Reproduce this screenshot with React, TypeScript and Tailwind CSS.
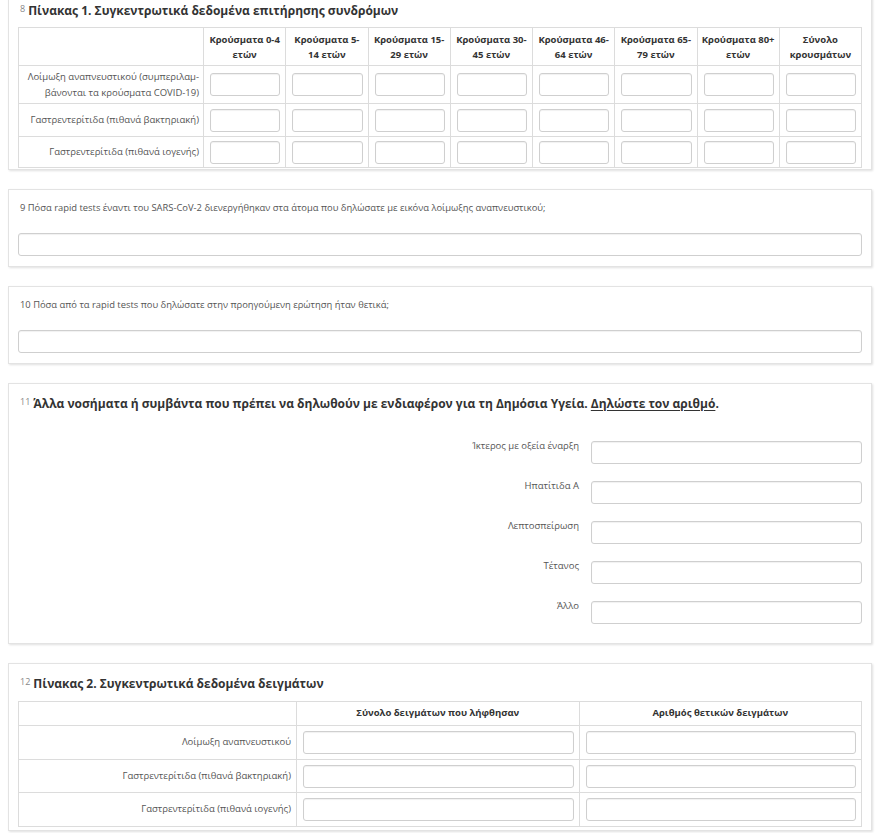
import React from "react";

const font = { fontFamily: '"Open Sans", "Noto Sans", Arial, sans-serif' };

function Card({ children, className = "" }: { children: React.ReactNode; className?: string }) {
  return (
    <div
      className={
        "bg-white border border-[#e3e3e3] shadow-[1px_1px_2px_rgba(0,0,0,0.12)] px-[9px] " + className
      }
    >
      {children}
    </div>
  );
}

function Input({ className = "" }: { className?: string }) {
  return (
    <div
      className={
        "h-[23px] w-full bg-white border border-[#cfcfcf] rounded-[3px] shadow-[inset_0_1px_1px_rgba(0,0,0,0.06)] " +
        className
      }
    />
  );
}

const t1Headers = [
  ["Κρούσματα 0-4", "ετών"],
  ["Κρούσματα 5-", "14 ετών"],
  ["Κρούσματα 15-", "29 ετών"],
  ["Κρούσματα 30-", "45 ετών"],
  ["Κρούσματα 46-", "64 ετών"],
  ["Κρούσματα 65-", "79 ετών"],
  ["Κρούσματα 80+", "ετών"],
  ["Σύνολο", "κρουσμάτων"],
];

const t1Rows: { label: string[]; h: string }[] = [
  { label: ["Λοίμωξη αναπνευστικού (συμπεριλαμ-", "βάνονται τα κρούσματα COVID-19)"], h: "h-[38px]" },
  { label: ["Γαστρεντερίτιδα (πιθανά βακτηριακή)"], h: "h-[33px]" },
  { label: ["Γαστρεντερίτιδα (πιθανά ιογενής)"], h: "h-[31px]" },
];

const t2Rows: { label: string; h: string }[] = [
  { label: "Λοίμωξη αναπνευστικού", h: "h-[34px]" },
  { label: "Γαστρεντερίτιδα (πιθανά βακτηριακή)", h: "h-[33px]" },
  { label: "Γαστρεντερίτιδα (πιθανά ιογενής)", h: "h-[34px]" },
];

const q11Rows = ["Ίκτερος με οξεία έναρξη", "Ηπατίτιδα Α", "Λεπτοσπείρωση", "Τέτανος", "Άλλο"];

function Title({ num, children }: { num: string; children: React.ReactNode }) {
  return (
    <div className="flex items-start h-[18px] pl-[2px]">
      <span className="text-[9px] text-[#888] leading-none mt-[2px] mr-[3px]">{num}</span>
      <span className="text-[12px] font-bold leading-[18px] text-[#333] whitespace-nowrap">{children}</span>
    </div>
  );
}

export default function App() {
  return (
    <div style={font} className="bg-white w-[882px] h-[833px] overflow-hidden text-[#333]">
      <div className="pl-[8px] w-[872px] flex flex-col gap-[19px]">
        {/* Card 1 */}
        <Card className="mt-[-11px] pt-[12px] pb-[1px]">
          <Title num="8">Πίνακας 1. Συγκεντρωτικά δεδομένα επιτήρησης συνδρόμων</Title>
          <table className="mt-[7px] w-full table-fixed border-collapse border border-[#dcdcdc]">
            <colgroup>
              <col className="w-[185px]" />
              {t1Headers.map((_, i) => (
                <col key={i} />
              ))}
            </colgroup>
            <thead>
              <tr className="h-[38px]">
                <th className="border border-[#dcdcdc]" />
                {t1Headers.map((h, i) => (
                  <th
                    key={i}
                    className="border border-[#dcdcdc] text-center text-[9.5px] font-bold leading-[15px] text-[#333] px-[2px]"
                  >
                    {h[0]}
                    <br />
                    {h[1]}
                  </th>
                ))}
              </tr>
            </thead>
            <tbody>
              {t1Rows.map((r, ri) => (
                <tr key={ri} className={r.h}>
                  <td className="border border-[#dcdcdc] text-right text-[9.5px] leading-[16px] text-[#555] pr-[4px] whitespace-nowrap">
                    {r.label.map((l, li) => (
                      <div key={li}>{l}</div>
                    ))}
                  </td>
                  {t1Headers.map((_, ci) => (
                    <td key={ci} className="border border-[#dcdcdc] pl-[6px] pr-[5px] align-middle">
                      <Input />
                    </td>
                  ))}
                </tr>
              ))}
            </tbody>
          </table>
        </Card>

        {/* Card Q9 */}
        <Card className="h-[78px] pt-[11px]">
          <div className="text-[9.4px] leading-[14px] text-[#555] pl-[2px] whitespace-nowrap">
            9 Πόσα rapid tests έναντι του SARS-CoV-2 διενεργήθηκαν στα άτομα που δηλώσατε με εικόνα λοίμωξης αναπνευστικού;
          </div>
          <Input className="mt-[18px]" />
        </Card>

        {/* Card Q10 */}
        <Card className="h-[78px] pt-[11px]">
          <div className="text-[9.4px] leading-[14px] text-[#555] pl-[2px] whitespace-nowrap">
            10 Πόσα από τα rapid tests που δηλώσατε στην προηγούμενη ερώτηση ήταν θετικά;
          </div>
          <Input className="mt-[18px]" />
        </Card>

        {/* Card Q11 */}
        <Card className="h-[261px] pt-[11px]">
          <Title num="11">
            Άλλα νοσήματα ή συμβάντα που πρέπει να δηλωθούν με ενδιαφέρον για τη Δημόσια Υγεία.{" "}
            <span className="underline underline-offset-2">Δηλώστε τον αριθμό</span>.
          </Title>
          <div className="mt-[28px] flex flex-col gap-[17px]">
            {q11Rows.map((l, i) => (
              <div key={i} className="flex items-start">
                <div className="w-[573px] text-right text-[9.5px] leading-[14px] text-[#555] pr-[12px] mt-[-2px]">
                  {l}
                </div>
                <div className="w-[271px]">
                  <Input />
                </div>
              </div>
            ))}
          </div>
        </Card>

        {/* Card Q12 */}
        <Card className="pt-[11px] pb-[3px]">
          <Title num="12">Πίνακας 2. Συγκεντρωτικά δεδομένα δειγμάτων</Title>
          <table className="mt-[8px] w-full table-fixed border-collapse border border-[#dcdcdc]">
            <colgroup>
              <col className="w-[278px]" />
              <col />
              <col />
            </colgroup>
            <thead>
              <tr className="h-[24px]">
                <th className="border border-[#dcdcdc]" />
                <th className="border border-[#dcdcdc] text-center text-[9.5px] font-bold text-[#333]">
                  Σύνολο δειγμάτων που λήφθησαν
                </th>
                <th className="border border-[#dcdcdc] text-center text-[9.5px] font-bold text-[#333]">
                  Αριθμός θετικών δειγμάτων
                </th>
              </tr>
            </thead>
            <tbody>
              {t2Rows.map((r, ri) => (
                <tr key={ri} className={r.h}>
                  <td className="border border-[#dcdcdc] text-right text-[9.5px] text-[#555] pr-[5px]">{r.label}</td>
                  <td className="border border-[#dcdcdc] pl-[6px] pr-[5px]">
                    <Input />
                  </td>
                  <td className="border border-[#dcdcdc] pl-[6px] pr-[5px]">
                    <Input />
                  </td>
                </tr>
              ))}
            </tbody>
          </table>
        </Card>
      </div>
    </div>
  );
}
